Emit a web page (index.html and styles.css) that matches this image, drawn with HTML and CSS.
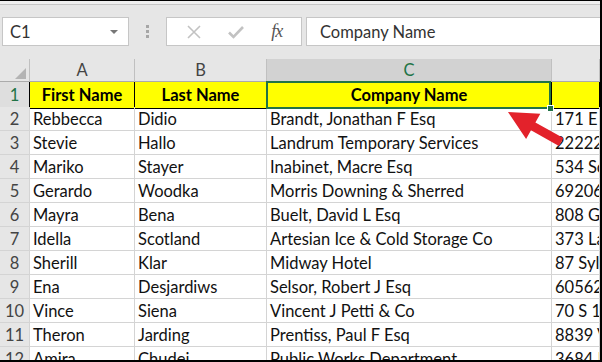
FILE: index.html
```html
<!DOCTYPE html>
<html lang="en">
<head>
  <meta charset="UTF-8" />
  <title>Sheet1 - Excel</title>
  <link rel="stylesheet" href="styles.css">
</head>
<body>
  <div class="window">
    <div class="ribbon-edge"></div>

    <!-- Name box + formula bar -->
    <div class="formula-row">
      <div class="name-box">
        <span>C1</span>
        <span class="caret"></span>
      </div>
      <div class="grip"><i></i><i></i><i></i></div>
      <div class="fx-buttons">
        <svg class="btn-icon" width="16" height="16" viewBox="0 0 16 16">
          <path d="M2 2 L14 14 M14 2 L2 14" stroke="#c2c2c2" stroke-width="1.6" fill="none"/>
        </svg>
        <svg class="btn-icon" width="18" height="16" viewBox="0 0 18 16">
          <path d="M2 8.5 L6.5 13 L16 3" stroke="#c2c2c2" stroke-width="2.6" fill="none"/>
        </svg>
        <span class="fx">fx</span>
      </div>
      <div class="formula-input">Company Name</div>
    </div>

    <!-- Sheet grid -->
    <div class="sheet">
      <div class="row head-row">
        <div class="corner"><span class="corner-tri"></span></div>
        <div class="col-head">A</div>
        <div class="col-head">B</div>
        <div class="col-head active">C</div>
        <div class="col-head"></div>
      </div>
      <div class="row first-row">
        <div class="row-head active">1</div>
        <div class="cell title">First Name</div>
        <div class="cell title">Last Name</div>
        <div class="cell title selected">Company Name</div>
        <div class="cell title"></div>
      </div>
      <div class="row"><div class="row-head">2</div><div class="cell">Rebbecca</div><div class="cell">Didio</div><div class="cell">Brandt, Jonathan F Esq</div><div class="cell">171 E 24th St</div></div>
      <div class="row"><div class="row-head">3</div><div class="cell">Stevie</div><div class="cell">Hallo</div><div class="cell">Landrum Temporary Services</div><div class="cell">22222 Athena Hwy</div></div>
      <div class="row"><div class="row-head">4</div><div class="cell">Mariko</div><div class="cell">Stayer</div><div class="cell">Inabinet, Macre Esq</div><div class="cell">534 Schoenborn St</div></div>
      <div class="row"><div class="row-head">5</div><div class="cell">Gerardo</div><div class="cell">Woodka</div><div class="cell">Morris Downing &amp; Sherred</div><div class="cell">69206 Jackson Ave</div></div>
      <div class="row"><div class="row-head">6</div><div class="cell">Mayra</div><div class="cell">Bena</div><div class="cell">Buelt, David L Esq</div><div class="cell">808 Glen Cove Ave</div></div>
      <div class="row"><div class="row-head">7</div><div class="cell">Idella</div><div class="cell">Scotland</div><div class="cell">Artesian Ice &amp; Cold Storage Co</div><div class="cell">373 Lafayette St</div></div>
      <div class="row"><div class="row-head">8</div><div class="cell">Sherill</div><div class="cell">Klar</div><div class="cell">Midway Hotel</div><div class="cell">87 Sylvan Ave</div></div>
      <div class="row"><div class="row-head">9</div><div class="cell">Ena</div><div class="cell">Desjardiws</div><div class="cell">Selsor, Robert J Esq</div><div class="cell">60562 Ky Rt 321</div></div>
      <div class="row"><div class="row-head">10</div><div class="cell">Vince</div><div class="cell">Siena</div><div class="cell">Vincent J Petti &amp; Co</div><div class="cell">70 S 18th Pl</div></div>
      <div class="row"><div class="row-head">11</div><div class="cell">Theron</div><div class="cell">Jarding</div><div class="cell">Prentiss, Paul F Esq</div><div class="cell">8839 Ventura Blvd</div></div>
      <div class="row"><div class="row-head">12</div><div class="cell">Amira</div><div class="cell">Chudej</div><div class="cell">Public Works Department</div><div class="cell">3684 N Wacker Dr</div></div>
    </div>

    <!-- Callout arrow -->
    <svg class="arrow" width="602" height="362" viewBox="0 0 602 362">
      <polygon fill="#e3222b" points="508,112 540.3,113.7 535.4,122.4 563.3,138.1 558.9,145.9 531,130.2 526.1,138.9"/>
    </svg>
  </div>
</body>
</html>
```

FILE: styles.css
```css
* {
  box-sizing: border-box;
  margin: 0;
  padding: 0;
}
body {
  font-family: 'Lato', 'Liberation Sans', sans-serif;
  background: #fff;
  overflow: hidden;
}
.window {
  position: relative;
  width: 602px;
  height: 362px;
  background: #e6e6e6;
  border-top: 1px solid #000;
  border-right: 2px solid #000;
  border-bottom: 2px solid #000;
  overflow: hidden;
}
.ribbon-edge {
  height: 4px;
  background: #efefef;
  border-bottom: 1px solid #c6c6c6;
}

/* Formula bar */
.formula-row {
  display: flex;
  height: 54px;
  padding: 12px 0 13px 2px;
}
.name-box {
  width: 127px;
  background: #fff;
  border: 1px solid #c6c6c6;
  display: flex;
  align-items: center;
  justify-content: space-between;
  padding: 0 10px 0 7px;
  font-size: 16.5px;
  color: #333;
}
.caret {
  width: 0;
  height: 0;
  border-left: 4px solid transparent;
  border-right: 4px solid transparent;
  border-top: 4px solid #777;
}
.grip {
  width: 37px;
  display: flex;
  flex-direction: column;
  align-items: center;
  justify-content: center;
  gap: 2px;
}
.grip i {
  width: 3px;
  height: 3px;
  background: #a6a6a6;
}
.fx-buttons {
  width: 136px;
  background: #fff;
  border: 1px solid #c6c6c6;
  display: flex;
  align-items: center;
  justify-content: space-around;
  padding: 0 6px 0 6px;
}
.fx {
  font-family: 'Liberation Serif', serif;
  font-style: italic;
  font-size: 18px;
  color: #555;
  letter-spacing: -1px;
}
.formula-input {
  flex: 1;
  margin-left: 4px;
  background: #fff;
  border: 1px solid #c6c6c6;
  border-right: none;
  display: flex;
  align-items: center;
  padding-left: 13px;
  font-size: 16.5px;
  color: #333;
}

/* Grid */
.row {
  display: grid;
  grid-template-columns: 30px 105px 132px 285px 1fr;
  height: 24px;
  background: #fff;
}
.row > div {
  border-right: 1px solid #d4d4d4;
  border-bottom: 1px solid #d4d4d4;
  white-space: nowrap;
  overflow: hidden;
  font-size: 16.5px;
  line-height: 25px;
}
.head-row {
  height: 23px;
  background: #e6e6e6;
}
.head-row > div {
  line-height: 23px;
  border-right-color: #c0c0c0;
  border-bottom-color: #ababab;
}
.corner {
  position: relative;
}
.corner-tri {
  position: absolute;
  right: 3px;
  bottom: 2px;
  width: 0;
  height: 0;
  border-left: 11px solid transparent;
  border-bottom: 11px solid #b4b4b4;
}
.col-head {
  text-align: center;
  color: #444;
}
.col-head.active {
  background: #d2d2d2;
  color: #217346;
}
.row-head {
  background: #e6e6e6;
  text-align: center;
  color: #444;
}
.row-head.active {
  color: #217346;
  background: #dedede;
}
.cell {
  padding-left: 3px;
  color: #111;
}
.first-row {
  height: 25px;
}
.first-row > div {
  line-height: 26px;
}
.cell.title {
  background: #ffff00;
  font-weight: bold;
  text-align: center;
  color: #000;
  border-color: #000;
  padding-left: 0;
}
.first-row .row-head {
  border-right-color: #000;
}
.cell.selected {
  position: relative;
  overflow: visible;
}
.cell.selected::before {
  content: "";
  position: absolute;
  top: -1px;
  left: -1px;
  right: 0;
  bottom: -1px;
  border: 2px solid #217346;
}
.cell.selected::after {
  content: "";
  position: absolute;
  right: -2px;
  bottom: -3px;
  width: 5px;
  height: 5px;
  background: #217346;
  box-shadow: 0 0 0 1px #fff;
}

/* Callout */
.arrow {
  position: absolute;
  top: -1px;
  left: 0;
  pointer-events: none;
}
```
